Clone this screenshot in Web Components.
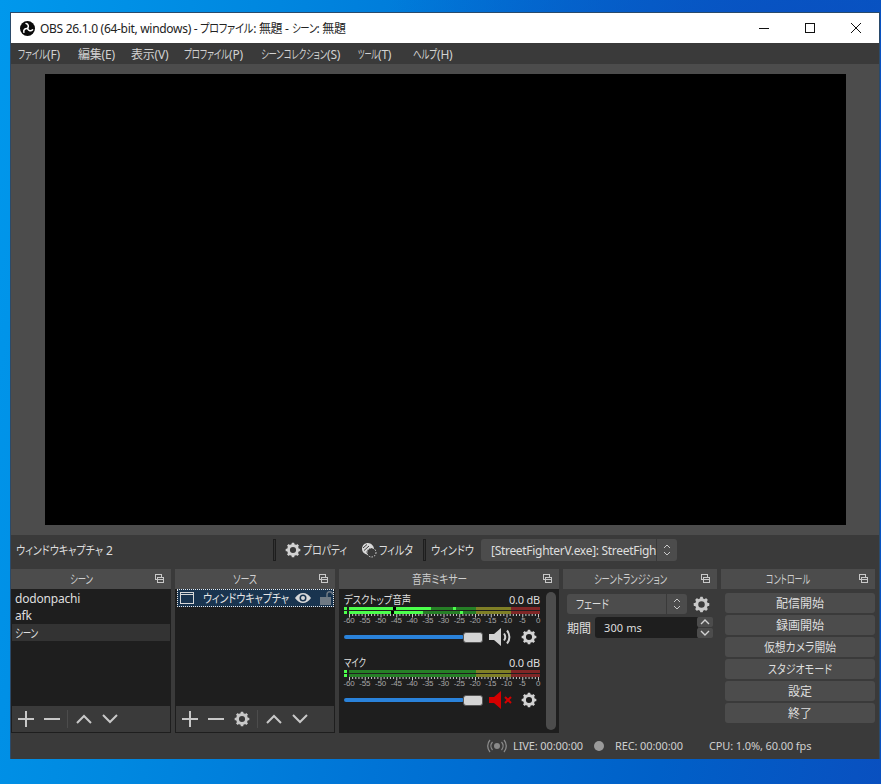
<!DOCTYPE html>
<html><head><meta charset="utf-8"><style>
html,body{margin:0;padding:0;height:784px;overflow:hidden}
body{font-family:"Noto Sans","Noto Sans CJK JP",sans-serif;font-feature-settings:"palt"}
</style></head><body>
<obs-desktop>
 <obs-window>
  <obs-titlebar>OBS 26.1.0 (64-bit, windows) - <obs-fit w="53">プロファイル</obs-fit>: 無題 - <obs-fit w="25">シーン</obs-fit>: 無題</obs-titlebar>
  <obs-menubar></obs-menubar>
  <obs-preview></obs-preview>
  <obs-sourcebar></obs-sourcebar>
  <obs-docks>
   <obs-dock title="シーン" w="23" style="width:160px">
     <obs-list>
       <obs-row>dodonpachi</obs-row><obs-row>afk</obs-row><obs-row active><obs-fit w="23">シーン</obs-fit></obs-row>
     </obs-list>
     <obs-listbar></obs-listbar>
   </obs-dock>
   <obs-dock title="ソース" w="24" style="width:160px">
     <obs-list flush><obs-source-row><obs-fit w="86">ウィンドウキャプチャ</obs-fit></obs-source-row></obs-list>
     <obs-listbar gear></obs-listbar>
   </obs-dock>
   <obs-dock title="音声ミキサー" w="55" style="width:220px"><obs-mixer></obs-mixer></obs-dock>
   <obs-dock title="シーントランジション" w="73" style="width:154px"><obs-transition></obs-transition></obs-dock>
   <obs-dock title="コントロール" w="44" style="width:154px"><obs-controls></obs-controls></obs-dock>
  </obs-docks>
  <obs-status></obs-status>
 </obs-window>
</obs-desktop>
<script>
function fit(w,t){return `<obs-fit w="${w}">${t}</obs-fit>`;}
function gearSvg(s,c){
  let t='';for(let i=0;i<8;i++)t+=`<rect x="10" y="1" width="4" height="5" rx=".6" transform="rotate(${i*45} 12 12)"/>`;
  return `<svg width="${s}" height="${s}" viewBox="0 0 24 24" fill="${c}" style="display:block;flex:none"><circle cx="12" cy="12" r="6.8" fill="none" stroke="${c}" stroke-width="4.4"/>${t}</svg>`;
}
const sel=`<svg width="8" height="14" viewBox="0 0 8 14" fill="none" stroke="#c8c8c8" style="display:block"><path d="M1 5 4 2 7 5M1 9 4 12 7 9"/></svg>`;
function def(name,html,init){
  customElements.define(name,class extends HTMLElement{
    connectedCallback(){
      if(this.shadowRoot)return;
      const r=this.attachShadow({mode:'open'});
      r.innerHTML=typeof html==='function'?html(this):html;
      if(init)init(r,this);
    }
  });
}
def('obs-desktop',`<style>:host{display:block;width:881px;height:784px;box-sizing:border-box;padding:12px 1px 0 10px;
 background:radial-gradient(ellipse 420px 330px at 800px 70px,#0a4fc0 0,#0a4fc000 100%),linear-gradient(100deg,#0098ec 0,#0088e0 25%,#0074d6 50%,#0060c8 78%,#0950c0 100%)}</style><slot></slot>`);
def('obs-window',`<style>:host{display:flex;flex-direction:column;width:870px;height:747px;box-sizing:border-box;border:1px solid #2a4a6a;border-bottom:0;background:#3a3a3a;color:#dedede;font-size:12px}</style><slot></slot>`);
def('obs-titlebar',`<style>:host{display:flex;align-items:center;height:30px;background:#fff;color:#222;flex:none;font-size:12px}
.logo{margin:0 0 0 9px;width:15px;height:15px;flex:none}
.t{margin-left:5px;flex:1;white-space:pre;letter-spacing:-.3px}
.b{width:46px;display:flex;justify-content:center;align-items:center;height:30px}
</style>
<svg class="logo" viewBox="0 0 30 30"><circle cx="15" cy="15" r="15" fill="#0a0a0a"/><g fill="none" stroke="#fff" stroke-width="3" stroke-linecap="round">
<path d="M15 15C18 11 17 6 12 5"/><path d="M15 15C18 11 17 6 12 5" transform="rotate(120 15 15)"/><path d="M15 15C18 11 17 6 12 5" transform="rotate(240 15 15)"/></g></svg>
<span class="t"><slot></slot></span>
<span class="b"><svg width="10" height="10"><path d="M0 5.500h10" stroke="#111"/></svg></span>
<span class="b"><svg width="10" height="10"><rect x=".5" y=".5" width="9" height="9" fill="none" stroke="#111"/></svg></span>
<span class="b"><svg width="10" height="10"><path d="M0 0 10 10M10 0 0 10" stroke="#111"/></svg></span>`);
def('obs-menubar',`<style>:host{display:flex;height:21px;flex:none;background:#3a3a3a;align-items:center;color:#d2d2d2;padding-left:7px;font-size:12px;letter-spacing:-.2px}
span{white-space:nowrap;flex:none}</style>
<span style="width:60px">${fit(29,'ファイル')}(F)</span><span style="width:53px">編集(E)</span><span style="width:53px">表示(V)</span><span style="width:77px">${fit(45,'プロファイル')}(P)</span><span style="width:97px">${fit(66,'シーンコレクション')}(S)</span><span style="width:55px">${fit(20,'ツール')}(T)</span><span>${fit(24,'ヘルプ')}(H)</span>`);
def('obs-preview',`<style>:host{display:block;height:471px;flex:none;background:#4c4c4c;box-sizing:border-box;padding:10px 33px 10px 34px}
div{background:#000;height:451px}</style><div></div>`);
def('obs-sourcebar',()=>`<style>:host{display:flex;align-items:center;height:34px;flex:none;box-sizing:border-box;padding:0 0 4px 5px;background:#3a3a3a;color:#dedede;font-size:12px;white-space:nowrap}
.n{width:257px;flex:none}
.s{width:3px;height:22px;border:1px solid #1e1e1e;box-sizing:border-box;background:#333;flex:none}
.a{display:flex;align-items:center;gap:2px;flex:none}
.c{margin-left:6px;height:22px;width:175px;flex:none;background:#4c4c4c;border-radius:3px 0 0 3px;display:flex;align-items:center;padding-left:10px;box-sizing:border-box;overflow:hidden;letter-spacing:-.3px}
.d{margin-left:1px;height:22px;width:20px;flex:none;background:#4c4c4c;border-radius:0 3px 3px 0;display:flex;align-items:center;justify-content:center}
</style>
<span class="n">${fit(87,'ウィンドウキャプチャ')} 2</span><span class="s"></span>
<span class="a" style="margin-left:9px;width:62px">${gearSvg(16,'#d2d2d2')}${fit(44,'プロパティ')}</span>
<span class="a" style="margin-left:14px;width:51px"><svg width="16" height="16" viewBox="0 0 16 16" fill="none" style="display:block;flex:none"><path d="M1 7C1 3 4 1 7 1c3 0 6 3 6 6l-6 6C3 12 1 10 1 7z" fill="#d8d8d8"/><path d="M2 6 6 2.500M3 8.500 8 4M5 10.500 10 6" stroke="#3a3a3a"/><circle cx="10.500" cy="10.500" r="4.500" fill="#3a3a3a" stroke="#d8d8d8" stroke-dasharray="1.500 1.200"/></svg>${fit(34,'フィルタ')}</span>
<span class="s" style="margin-left:11px"></span>
<span style="margin-left:5px;width:44px;flex:none">${fit(43,'ウィンドウ')}</span>
<span class="c">[StreetFighterV.exe]: StreetFigh</span><span class="d">${sel}</span>`);
def('obs-docks',`<style>:host{display:flex;gap:4px;height:164px;flex:none;padding-left:0}</style><slot></slot>`);
def('obs-dock',h=>`<style>:host{display:flex;flex-direction:column;flex:none;height:164px}
.h{height:20px;flex:none;background:#4c4c4c;position:relative;display:flex;align-items:center;justify-content:center;color:#cfcfcf;font-size:12px;box-sizing:border-box;padding-right:20px}
.h svg{position:absolute;right:7px;top:5px}
.b{flex:1;display:flex;flex-direction:column;min-height:0}</style>
<div class="h">${fit(h.getAttribute('w'),h.getAttribute('title'))}<svg width="9" height="9" fill="none" stroke="#c8c8c8"><rect x=".5" y=".5" width="6" height="5"/><rect x="2.500" y="3.500" width="6" height="5" fill="#4c4c4c"/><path d="M3 5.500h5" /></svg></div><div class="b"><slot></slot></div>`);
def('obs-list',`<style>:host{display:block;flex:1;background:#1e1e1e;padding:1px 1px 0;min-height:0;color:#dedede}:host([flush]){padding-top:0}</style><slot></slot>`);
def('obs-row',`<style>:host{display:flex;align-items:center;height:17px;padding-left:3px;font-size:12px;background:transparent;letter-spacing:-.2px}:host([active]){background:#333}</style><slot></slot>`);
def('obs-source-row',`<style>:host{display:flex;align-items:center;height:18px;box-sizing:border-box;margin:0 0 0 1px;width:157px;background:#19344f;outline:1px dotted #e8e8e8;outline-offset:-1px;font-size:12px;color:#e6e6e6}
svg{display:block;flex:none}
.i{margin:0 9px 0 3px}.e{margin-left:6px}.l{margin-left:9px}.x{width:86px;flex:none;white-space:nowrap}</style>
<svg class="i" width="14" height="12" fill="none" stroke="#d8d8d8"><rect x=".5" y=".5" width="13" height="11"/><path d="M1 2.500h12"/></svg><span class="x"><slot></slot></span>
<svg class="e" width="16" height="10" viewBox="0 0 16 10"><path d="M0 5C2.500 1.500 5 0 8 0s5.500 1.500 8 5c-2.500 3.500-5 5-8 5S2.500 8.500 0 5z" fill="#d8d8d8"/><circle cx="8" cy="5" r="3.500" fill="#19344f"/><circle cx="8" cy="5" r="2" fill="#d8d8d8"/></svg>
<svg class="l" width="13" height="14" viewBox="0 0 13 14" fill="#6f7a84"><rect y="6" width="11" height="8"/><path d="M7 6V3.500a2.700 2.700 0 0 1 5.500 0" fill="none" stroke="#6f7a84" stroke-width="1.500"/></svg>`);
def('obs-listbar',h=>`<style>:host{display:flex;align-items:center;height:27px;flex:none;box-sizing:border-box;background:#3a3a3a;border:1px solid #1e1e1e;border-top:0;padding-left:1px}
svg{display:block;flex:none}.i{width:26px;display:flex;justify-content:center}.s{width:1px;height:18px;background:#4c4c4c;margin:0 3px 0 2px}</style>
<span class="i"><svg width="16" height="16" stroke="#c8c8c8" stroke-width="2"><path d="M8 0v16M0 8h16"/></svg></span>
<span class="i"><svg width="16" height="16" stroke="#c8c8c8" stroke-width="2"><path d="M0 8h16"/></svg></span>
${h.hasAttribute('gear')?`<span class="i">${gearSvg(16,'#c8c8c8')}</span>`:''}
<span class="s"></span>
<span class="i"><svg width="16" height="10" fill="none" stroke="#c8c8c8" stroke-width="2"><path d="M1 9 8 2 15 9"/></svg></span>
<span class="i"><svg width="16" height="10" fill="none" stroke="#c8c8c8" stroke-width="2"><path d="M1 1 8 8 15 1"/></svg></span>`);
def('obs-meter',h=>{
 const bg=h.hasAttribute('off')?
 `linear-gradient(90deg,#267f26 0 127px,#7f7f26 127px 162px,#7f2626 162px)`:null;
 let ticks='';
 for(let d=0;d<=60;d++){const x=(d*3.15+5.5).toFixed(2);ticks+=`<path d="M${x} 0v${d%5?2:3.5}"/>`;}
 let labels='';
 for(let d=-60;d<=0;d+=5)labels+=`<span>${d}</span>`;
 const top=h.hasAttribute('off')?bg:`linear-gradient(90deg,#4cff4c 0 44px,#000 44px 47px,#4cff4c 47px 82px,#267f26 82px 104px,#4cff4c 104px 107px,#267f26 107px 127px,#7f7f26 127px 162px,#7f2626 162px)`;
 const bot=h.hasAttribute('off')?bg:`linear-gradient(90deg,#4cff4c 0 42px,#000 42px 45px,#4cff4c 45px 74px,#267f26 74px 111px,#4cff4c 111px 114px,#267f26 114px 127px,#7f7f26 127px 162px,#7f2626 162px)`;
 return `<style>:host{display:block;width:196px}
 .r{display:flex;gap:2px;height:3px}.r+.r{margin-top:1px}.p{width:3px;background:#4cff4c}.m{flex:1}
 svg{display:block;width:196px;height:4px}
 .l{display:flex;justify-content:space-between;width:189px;margin-left:5px;font:8px/8px "Liberation Sans",sans-serif;color:#a8a8a8;height:8px;margin-top:-1px}
 .l span{width:0;display:flex;justify-content:center;white-space:nowrap;letter-spacing:-.2px}
 </style><div class="r"><div class="p"></div><div class="m" style="background:${top}"></div></div>
 <div class="r"><div class="p"></div><div class="m" style="background:${bot}"></div></div>
 <svg viewBox="0 0 196 4" stroke="#c8c8c8" fill="none">${ticks}</svg><div class="l">${labels}</div>`;
});
def('obs-channel',h=>`<style>:host{display:block;width:196px;height:63px;color:#dedede}
.t{display:flex;justify-content:space-between;height:14px;align-items:center;font-size:11px;margin-bottom:1px}
.v{display:flex;align-items:center;margin-top:1px;height:22px}
.tr{width:120px;height:4px;background:#2a82da;border-radius:2px;flex:none}
.k{width:18px;height:9px;background:#d4d4d4;border:1px solid #555;border-radius:3px;flex:none;margin-left:-1px;margin-right:6px}
.sp{width:24px;flex:none;display:flex}
.g{margin-left:8px}
</style><div class="t"><span>${fit(h.getAttribute('w'),h.getAttribute('name'))}</span><span style="letter-spacing:-.2px">0.0 dB</span></div>
<obs-meter ${h.hasAttribute('muted')?'off':''}></obs-meter>
<div class="v"><div class="tr"></div><div class="k"></div>
<span class="sp">${h.hasAttribute('muted')?
`<svg width="24" height="18" viewBox="0 0 24 18"><path d="M0 6h5l7-6v18l-7-6H0z" fill="#d40000"/><path d="M16 6l6 6M22 6l-6 6" stroke="#d40000" stroke-width="2"/></svg>`:
`<svg width="24" height="18" viewBox="0 0 24 18" fill="none"><path d="M0 6h5l7-6v18l-7-6H0z" fill="#d2d2d2"/><path d="M15 5.500a6 6 0 0 1 0 7M18 2.500a10 10 0 0 1 0 13" stroke="#d2d2d2" stroke-width="2"/></svg>`}</span>
<span class="g">${gearSvg(16,'#d2d2d2')}</span></div>`);
def('obs-mixer',`<style>:host{display:flex;flex:1;background:#1e1e1e;box-sizing:border-box;padding:3px 3px 3px 5px;justify-content:space-between;min-height:0}
.c{display:flex;flex-direction:column;width:196px}
.b{width:10px;background:#4c4c4c;border-radius:5px;height:138px;flex:none;margin-right:0}
</style><div class="c"><obs-channel name="デスクトップ音声" w="67"></obs-channel><obs-channel name="マイク" w="22" muted></obs-channel></div><div class="b"></div>`);
def('obs-transition',()=>`<style>:host{display:flex;flex-direction:column;flex:1;padding:5px 0 0 4px;background:#3a3a3a;font-size:12px;color:#dedede}
.r{display:flex;align-items:center}
.s{width:99px;height:20px;background:#4c4c4c;border-radius:3px 0 0 3px;padding-left:9px;box-sizing:border-box;display:flex;align-items:center}
.d{width:20px;height:20px;background:#4c4c4c;margin-left:1px;border-radius:0 3px 3px 0;display:flex;align-items:center;justify-content:center}
.g{margin-left:6px}
.i{width:103px;height:21px;background:#1e1e1e;border-radius:3px 0 0 3px;margin-left:5px;box-sizing:border-box;padding-left:9px;display:flex;align-items:center;font-size:11px;letter-spacing:.1px}
.sp{display:flex;flex-direction:column;gap:1px;margin-left:-1px}
.sp span{width:16px;height:10px;background:#4c4c4c;border-radius:2px;display:flex;align-items:center;justify-content:center}
</style><div class="r"><span class="s">${fit(33,'フェード')}</span><span class="d">${sel}</span><span class="g">${gearSvg(17,'#c8c8c8')}</span></div>
<div class="r" style="margin-top:3px"><span style="width:23px;white-space:nowrap">期間</span><span class="i">300 ms</span><span class="sp"><span><svg width="10" height="6" fill="none" stroke="#d2d2d2" stroke-width="1.400"><path d="M1 5 5 1 9 5"/></svg></span><span><svg width="10" height="6" fill="none" stroke="#d2d2d2" stroke-width="1.400"><path d="M1 1 5 5 9 1"/></svg></span></span></div>`);
def('obs-controls',`<style>:host{display:flex;flex-direction:column;gap:2px;flex:1;padding:4px 0 0 4px;font-size:12px;color:#dedede}
span{width:150px;height:20px;background:#4c4c4c;border-radius:3px;display:flex;align-items:center;justify-content:center}</style>
<span>配信開始</span><span>録画開始</span><span>${fit(72,'仮想カメラ開始')}</span><span>${fit(64,'スタジオモード')}</span><span>設定</span><span>終了</span>`);
def('obs-status',`<style>:host{display:flex;align-items:center;height:25px;flex:none;font-size:11px;color:#cfcfcf;padding-left:476px;white-space:nowrap;letter-spacing:-.12px;background:#3a3a3a}
span{flex:none}
.d{width:10px;height:10px;border-radius:5px;background:#9a9a9a;margin:0 11px;flex:none}</style>
<svg width="20" height="14" viewBox="0 0 20 14" fill="none" stroke="#8a8a8a" stroke-width="1.300" style="margin-right:6px;flex:none"><circle cx="10" cy="7" r="3" fill="#8a8a8a" stroke="none"/><path d="M5.500 3a6 6 0 0 0 0 8M14.500 3a6 6 0 0 1 0 8M3 1a9 9 0 0 0 0 12M17 1a9 9 0 0 1 0 12"/></svg>
<span style="width:70px">LIVE: 00:00:00</span><span class="d"></span><span style="width:69px">REC: 00:00:00</span><span style="margin-left:25px">CPU: 1.0%, 60.00 fps</span>`);
/* condensed text element: defined last so every surrounding style already applies when it measures itself */
customElements.define('obs-fit',class extends HTMLElement{
  connectedCallback(){
    if(this.shadowRoot)return;
    const w=+this.getAttribute('w');
    const r=this.attachShadow({mode:'open'});
    r.innerHTML=`<style>:host{display:inline-block;width:${w}px;white-space:nowrap;flex:none;vertical-align:baseline}
    span{display:inline-block;transform-origin:0 50%}</style><span><slot></slot></span>`;
    const s=r.querySelector('span');
    const m=s.getBoundingClientRect().width;
    if(m)s.style.transform=`scaleX(${w/m})`;
  }
});
</script>
</body></html>
